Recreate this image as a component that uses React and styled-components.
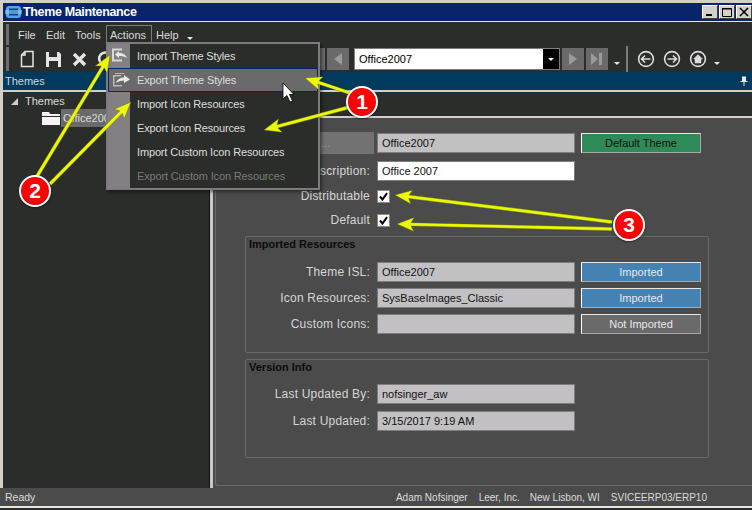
import React from 'react';
import styled, { createGlobalStyle } from 'styled-components';

const Global = createGlobalStyle`
  html, body { margin: 0; padding: 0; background: #2b2d2a; overflow: hidden; }
  * { box-sizing: border-box; }
`;

const Screen = styled.div`
  position: relative; width: 752px; height: 510px; overflow: hidden;
  display: flex; flex-direction: column;
  background: #d4d0c8; padding-top: 3px; padding-left: 3px;
  font-family: "Liberation Sans", Arial, sans-serif; font-size: 11px; color: #dcdcdc;
`;
const TitleBar = styled.div`
  height: 19px; flex: none; display: flex; align-items: center; gap: 1px; padding: 0 0 1px 2px;
  background: #0a246a; border-bottom: 1px solid #e8e8e8; color: #fff;
  font-weight: 700; font-size: 12.5px; letter-spacing: -.35px;
`;
const TitleText = styled.span` flex: 1; `;
const WinButtons = styled.div` display: flex; gap: 1px; `;
const WinBtn = styled.div`
  width: 16px; height: 14px; background: #d4d0c8; color: #000; position: relative;
  border: 1px solid; border-color: #fff #404040 #404040 #fff; display: flex; align-items: center; justify-content: center;
`;
const MenuStrip = styled.div`
  height: 24px; flex: none; background: #2b2d2a; display: flex; align-items: center;
  padding-left: 3px; padding-top: 1px;
`;
const Grip = styled.div` width: 3px; align-self: stretch; margin: 1px 0 1px 0; background: #6e6d6e; flex: none; `;
const MenuItems = styled.div` display: flex; align-items: center; margin-left: 5px; font-size: 11px; `;
const MenuLabel = styled.div`
  height: 19px; width: ${p => p.$w}px; padding: 0 3px; display: flex; align-items: center; flex: none;
  border: 1px solid ${p => p.$open ? '#7d7b7d' : 'transparent'};
`;
const Chevron = styled.span`
  display: inline-block; width: 0; height: 0; flex: none;
  border-left: 3px solid transparent; border-right: 3px solid transparent; border-top: 3px solid #e6e6e6;
  margin-left: ${p => p.$ml || 0}px; margin-top: 8px;
`;
const ToolStrip = styled.div`
  height: 26px; flex: none; background: #2b2d2a; display: flex; align-items: center; padding-left: 3px;
`;
const ToolIcon = styled.div`
  width: ${p => p.$w || 26}px; height: 24px; flex: none; display: flex; align-items: center; justify-content: center;
`;
const ToolSpacer = styled.div` flex: none; width: ${p => p.$w}px; `;
const NavBtn = styled.div`
  width: 22px; height: 22px; flex: none; background: #6b6a6b; margin-right: 2px;
  display: flex; align-items: center; justify-content: center;
`;
const Combo = styled.div`
  width: 206px; height: 22px; flex: none; margin: 0 2px 0 3px; display: flex; background: #fff;
  border: 1px solid #7d7d7d; color: #000; align-items: center;
`;
const ComboText = styled.span` flex: 1; padding-left: 4px; `;
const ComboDrop = styled.div`
  width: 16px; align-self: stretch; background: #000; display: flex; align-items: center; justify-content: center;
  &::after { content: ''; border-left: 3px solid transparent; border-right: 3px solid transparent; border-top: 3px solid #fff; }
`;
const ToolSep = styled.div` width: 2px; height: 26px; background: #7d7d7d; flex: none; margin: 0 5px 0 6px; `;
const DockHeader = styled.div`
  height: 18px; flex: none; background: #003a5c; display: flex; align-items: center; justify-content: space-between;
  padding: 0 4px 0 2px; color: #cfd8de;
`;
const Main = styled.div` flex: 1; min-height: 0; display: flex; border-top: 2px solid #d4d0c8; `;
const TreePanel = styled.div`
  width: 207px; flex: none; background: #2b2d2a; border-right: 1px solid #111; padding: 1px 0 0 7px;
`;
const TreeRow = styled.div` display: flex; align-items: center; height: ${p => p.$h}px; padding-left: ${p => p.$pl || 0}px; gap: ${p => p.$gap || 0}px; `;
const Selected = styled.span` background: #6b6a6b; padding: 0 22px 0 2px; height: 18px; display: flex; align-items: center; `;
const Splitter = styled.div` width: 3px; flex: none; background: #c8c8c8; `;
const RightCol = styled.div` flex: 1; min-width: 0; display: flex; flex-direction: column; `;
const TabStrip = styled.div` height: 26px; flex: none; background: #2b2d2a; border-bottom: 2px solid #d4d0c8; `;
const Panel = styled.div` flex: 1; min-height: 0; background: #4b4b4b; padding: 0 0 2px 2px; `;
const Inner = styled.div`
  height: 100%; border-left: 1px solid #686868; border-bottom: 1px solid #686868; border-bottom-left-radius: 3px;
  padding-top: 11px;
`;
const FormRows = styled.div` display: flex; flex-direction: column; `;
const Row = styled.div`
  display: grid; grid-template-columns: ${p => p.$label}px 198px 120px; column-gap: 6px; align-items: center;
  height: ${p => p.$h || 26}px; flex: none;
`;
const Label = styled.div` text-align: right; padding-right: 1px; letter-spacing: .2px; color: #d6d6d6; white-space: nowrap; font-size: 12px; `;
const Redacted = styled.div`
  height: 22px; margin: 0 -3px 0 104px; background: #727272; color: #9a9a9a; display: flex; align-items: center; padding-left: 1px;
`;
const Field = styled.div`
  height: 20px; display: flex; align-items: center; padding-left: 4px; color: #111;
  background: ${p => p.$white ? '#fff' : '#c3c0c3'}; border: 1px solid #7d7d7d;
`;
const Status = styled.div`
  height: 20px; display: flex; align-items: center; justify-content: center;
  background: ${p => p.$bg}; color: ${p => p.$dark ? '#111' : '#e8e8e8'};
  border: 1px solid; border-color: #e8e8e8 #a8a8a8 #a8a8a8 #fff;
`;
const Check = styled.div`
  width: 13px; height: 13px; background: #fff; border: 1px solid #888; color: #000;
  display: flex; align-items: center; justify-content: center;
`;
const Group = styled.div`
  margin: ${p => p.$mt}px 0 0 29px; width: 464px; height: ${p => p.$h}px; flex: none;
  border: 1px solid #686868; border-radius: 2px;
`;
const GroupTitle = styled.div`
  font-weight: 700; color: #0c0c0c; height: 14px; line-height: 14px; padding-left: 3px; font-size: 11px;
  margin-bottom: ${p => p.$mb}px;
`;
const StatusBar = styled.div`
  height: 18px; flex: none; background: #4b4b4b; display: flex; align-items: center; margin-left: -3px; padding: 0 45px 0 5px;
`;
const StatusLeft = styled.span` flex: 1; font-size: 10.5px; `;
const StatusItem = styled.span` margin-left: ${p => p.$ml}px; font-size: 10px; `;
const Bottom = styled.div` height: 4px; flex: none; margin-left: -3px; background: #2b2d2a; border-top: 2px solid #e8e8dc; `;

/* Dropdown menu over the page */
const DropMenu = styled.div`
  position: absolute; left: 106px; top: 42px; width: 214px; height: 148px; display: flex; flex-direction: column;
  background: linear-gradient(90deg, #838083 0 22px, #2b2d2a 22px);
  border: 2px solid #7d7b7d; box-shadow: 2px 2px 3px rgba(0,0,0,.45);
`;
const DropItem = styled.div`
  height: 24px; flex: none; display: flex; align-items: center; padding-left: 29px; position: relative; letter-spacing: -.15px;
  color: ${p => p.$disabled ? '#7a7a7a' : '#dedede'};
  ${p => p.$active && 'background:#6b6a6b;border:1px solid #0a246a;padding-left:28px;'}
`;
const DropIcon = styled.svg` position: absolute; left: 2px; top: 3px; `;
const Overlay = styled.svg` position: absolute; inset: 0; pointer-events: none; `;
const Badge = styled.div`
  position: absolute; left: ${p => p.$x - 16}px; top: ${p => p.$y - 16}px; width: 32px; height: 32px; border-radius: 50%;
  background: radial-gradient(circle at 50% 40%, #f00 55%, #c80000); border: 2px solid #fff; box-shadow: 0 1px 2px rgba(0,0,0,.5);
  display: flex; align-items: center; justify-content: center; color: #fff; font-weight: 700; font-size: 21px;
`;

const items = [
  { t: 'Import Theme Styles', icon: 'imp' },
  { t: 'Export Theme Styles', icon: 'exp', active: true },
  { t: 'Import Icon Resources' },
  { t: 'Export Icon Resources' },
  { t: 'Import Custom Icon Resources' },
  { t: 'Export Custom Icon Resources', disabled: true },
];

const Arrow = ({ from, to }) => {
  const [x1, y1] = from, [x2, y2] = to;
  const a = Math.atan2(y2 - y1, x2 - x1);
  const ux = Math.cos(a), uy = Math.sin(a), px = -uy, py = ux;
  const bx = x2 - ux * 17, by = y2 - uy * 17;
  const pts = [
    [x2, y2],
    [bx + px * 7, by + py * 7],
    [bx + ux * 3 + px * 1.7, by + uy * 3 + py * 1.7],
    [x1 + px * 1.7, y1 + py * 1.7],
    [x1 - px * 1.7, y1 - py * 1.7],
    [bx + ux * 3 - px * 1.7, by + uy * 3 - py * 1.7],
    [bx - px * 7, by - py * 7],
  ].map(p => p.join(',')).join(' ');
  return <polygon points={pts} fill="#ecfa00" stroke="#5a5f10" strokeWidth=".4" />;
};

const CheckMark = () => (
  <svg width="9" height="9" viewBox="0 0 9 9"><path d="M1 4.5 L3.5 7.5 L8 1.2" fill="none" stroke="#000" strokeWidth="2" /></svg>
);
const CircleIcon = ({ children }) => (
  <svg width="18" height="18" viewBox="0 0 18 18" fill="none" stroke="#dcdcdc" strokeWidth="1.6">
    <circle cx="9" cy="9" r="7.4" />{children}
  </svg>
);
const Tri = ({ left }) => (
  <svg width="14" height="16" viewBox="0 0 14 16"><path d={left ? 'M11 2V14L3 8Z' : 'M3 2V14L11 8Z'} fill="#9b9a9b" /></svg>
);

export default function App() {
  return (
    <Screen>
      <Global />
      <TitleBar>
        <svg width="17" height="14" viewBox="0 0 17 14"><rect x="1" y="1" width="15" height="12" rx="3" fill="#4fa8e6" /><rect x="4" y="3.5" width="9" height="7" fill="#0a3c8c" /><rect x="0" y="5" width="17" height="4" fill="#8fd0f5" opacity=".6" /></svg>
        <TitleText>Theme Maintenance</TitleText>
        <WinButtons>
          <WinBtn><svg width="10" height="10"><rect x="1" y="7" width="6" height="2" fill="#000" /></svg></WinBtn>
          <WinBtn><svg width="10" height="10"><path d="M.5 1.5H9.5V9.5H.5Z M.5 1V2H9.5" fill="none" stroke="#000" /></svg></WinBtn>
          <WinBtn><svg width="10" height="10"><path d="M1 1L9 9M9 1L1 9" stroke="#000" strokeWidth="1.6" /></svg></WinBtn>
        </WinButtons>
      </TitleBar>
      <MenuStrip>
        <Grip />
        <MenuItems>
          <MenuLabel $w={28}>File</MenuLabel>
          <MenuLabel $w={29}>Edit</MenuLabel>
          <MenuLabel $w={35}>Tools</MenuLabel>
          <MenuLabel $w={46} $open>Actions</MenuLabel>
          <MenuLabel $w={30}>Help</MenuLabel>
          <Chevron $ml={5} />
        </MenuItems>
      </MenuStrip>
      <ToolStrip>
        <Grip />
        <ToolSpacer $w={5} />
        <ToolIcon>
          <svg width="16" height="18" viewBox="0 0 16 18" fill="none" stroke="#e4e4e4" strokeWidth="1.5"><path d="M6 1.5H14V16.5H2.5V5Z M6 1.5V5H2.5" /></svg>
        </ToolIcon>
        <ToolIcon>
          <svg width="17" height="17" viewBox="0 0 17 17"><path d="M1 1H14L16 3V16H1Z" fill="#e4e4e4" /><rect x="4" y="1" width="8" height="5" fill="#2b2d2a" /><rect x="4" y="10" width="9" height="6" fill="#2b2d2a" /></svg>
        </ToolIcon>
        <ToolIcon>
          <svg width="15" height="15" viewBox="0 0 15 15"><path d="M2 2L13 13M13 2L2 13" stroke="#e4e4e4" strokeWidth="3.4" /></svg>
        </ToolIcon>
        <ToolIcon>
          <svg width="16" height="16" viewBox="0 0 16 16" fill="none" stroke="#e4e4e4" strokeWidth="2.6"><path d="M13 4A6 6 0 1 0 14 9" /></svg>
        </ToolIcon>
        <ToolSpacer $w={185} />
        <NavBtn><Tri left /></NavBtn>
        <NavBtn><Tri left /></NavBtn>
        <Combo><ComboText>Office2007</ComboText><ComboDrop /></Combo>
        <NavBtn><Tri /></NavBtn>
        <NavBtn>
          <svg width="14" height="16" viewBox="0 0 14 16"><path d="M1 2V14L8 8Z M9 2H12V14H9Z" fill="#9b9a9b" /></svg>
        </NavBtn>
        <Chevron $ml={4} />
        <ToolSep />
        <ToolIcon $w={26}><CircleIcon><path d="M13.5 9H5M8 5.5L4.5 9L8 12.5" /></CircleIcon></ToolIcon>
        <ToolIcon $w={26}><CircleIcon><path d="M4.5 9H13M10 5.5L13.5 9L10 12.5" /></CircleIcon></ToolIcon>
        <ToolIcon $w={26}><CircleIcon><path d="M9 4.5L4.5 9H6V13H12V9H13.5Z" fill="#dcdcdc" strokeWidth=".5" /></CircleIcon></ToolIcon>
        <Chevron $ml={3} />
      </ToolStrip>
      <DockHeader>
        <span>Themes</span>
        <svg width="8" height="10" viewBox="0 0 8 10"><path d="M2 .5H6V5H7.5V6H4.5V10H3.5V6H.5V5H2Z" fill="#e8e8e8" /></svg>
      </DockHeader>
      <Main>
        <TreePanel>
          <TreeRow $h={16} $gap={6}>
            <svg width="9" height="9" viewBox="0 0 9 9"><path d="M8 1V8H1Z" fill="#d0d0d0" /></svg>
            <span>Themes</span>
          </TreeRow>
          <TreeRow $h={18} $pl={32} $gap={1}>
            <svg width="18" height="14" viewBox="0 0 18 14"><path d="M0 1H7L8 3H18V5H0Z M0 6H18V14H0Z" fill="#f4f4f4" /></svg>
            <Selected>Office2007</Selected>
          </TreeRow>
        </TreePanel>
        <Splitter />
        <RightCol>
          <TabStrip />
          <Panel>
            <Inner>
              <FormRows>
                <Row $label={155} $h={28}>
                  <Redacted>...</Redacted>
                  <Field>Office2007</Field>
                  <Status $bg="#2e8b57" $dark>Default Theme</Status>
                </Row>
                <Row $label={155} $h={28}>
                  <Label>Description:</Label>
                  <Field $white>Office 2007</Field>
                </Row>
                <Row $label={155} $h={22}>
                  <Label>Distributable</Label>
                  <Check><CheckMark /></Check>
                </Row>
                <Row $label={155} $h={26}>
                  <Label>Default</Label>
                  <Check><CheckMark /></Check>
                </Row>
                <Group $mt={3} $h={117}>
                  <GroupTitle $mb={8}>Imported Resources</GroupTitle>
                  <Row $label={125} $h={26}>
                    <Label>Theme ISL:</Label><Field>Office2007</Field><Status $bg="#4482b4">Imported</Status>
                  </Row>
                  <Row $label={125} $h={26}>
                    <Label>Icon Resources:</Label><Field>SysBaseImages_Classic</Field><Status $bg="#4482b4">Imported</Status>
                  </Row>
                  <Row $label={125} $h={26}>
                    <Label>Custom Icons:</Label><Field /><Status $bg="#6b6a6b">Not Imported</Status>
                  </Row>
                </Group>
                <Group $mt={6} $h={99}>
                  <GroupTitle $mb={6}>Version Info</GroupTitle>
                  <Row $label={125} $h={27}>
                    <Label>Last Updated By:</Label><Field>nofsinger_aw</Field>
                  </Row>
                  <Row $label={125} $h={27}>
                    <Label>Last Updated:</Label><Field>3/15/2017 9:19 AM</Field>
                  </Row>
                </Group>
              </FormRows>
            </Inner>
          </Panel>
        </RightCol>
      </Main>
      <StatusBar>
        <StatusLeft>Ready</StatusLeft>
        <StatusItem $ml={0}>Adam Nofsinger</StatusItem>
        <StatusItem $ml={11}>Leer, Inc.</StatusItem>
        <StatusItem $ml={10}>New Lisbon, WI</StatusItem>
        <StatusItem $ml={11}>SVICEERP03/ERP10</StatusItem>
      </StatusBar>
      <Bottom />

      <DropMenu>
        {items.map(it => (
          <DropItem key={it.t} $active={it.active} $disabled={it.disabled}>
            {it.icon === 'imp' && (
              <DropIcon width="18" height="16" viewBox="0 0 18 16"><path d="M2 1.5H12V3.5H4V12.5H12V14.5H2Z" fill="#d8d8d8" /><path d="M5 7.5L9 4V6C13 6 16 8 17 11C15 9.5 12 9 9 9V11Z" fill="#e8e8e8" /></DropIcon>
            )}
            {it.icon === 'exp' && (
              <DropIcon width="20" height="16" viewBox="0 0 20 16"><path d="M2 3H10V4.5H3.5V13H11V14.5H2Z M4 1H13V2H4Z" fill="#b8b8b8" /><path d="M5 11C6 7 10 5.5 13 5.5V3L19 7.5L13 11V8.5C10 8.5 7 9.5 5 11Z" fill="#e8e8e8" /></DropIcon>
            )}
            {it.t}
          </DropItem>
        ))}
      </DropMenu>

      <Overlay width="752" height="510" viewBox="0 0 752 510">
        <Arrow from={[350, 93]} to={[305, 78]} />
        <Arrow from={[350, 107]} to={[264, 130]} />
        <Arrow from={[36, 178]} to={[110, 55]} />
        <Arrow from={[50, 184]} to={[131, 102]} />
        <Arrow from={[612, 222]} to={[395, 195]} />
        <Arrow from={[612, 229]} to={[397, 224]} />
        <path d="M283 83V99L287 95.5L290 102L292.5 101L289.5 94.5H294Z" fill="#fff" stroke="#000" strokeWidth=".8" />
      </Overlay>
      <Badge $x={362} $y={102}>1</Badge>
      <Badge $x={35} $y={191}>2</Badge>
      <Badge $x={629} $y={225}>3</Badge>
    </Screen>
  );
}
